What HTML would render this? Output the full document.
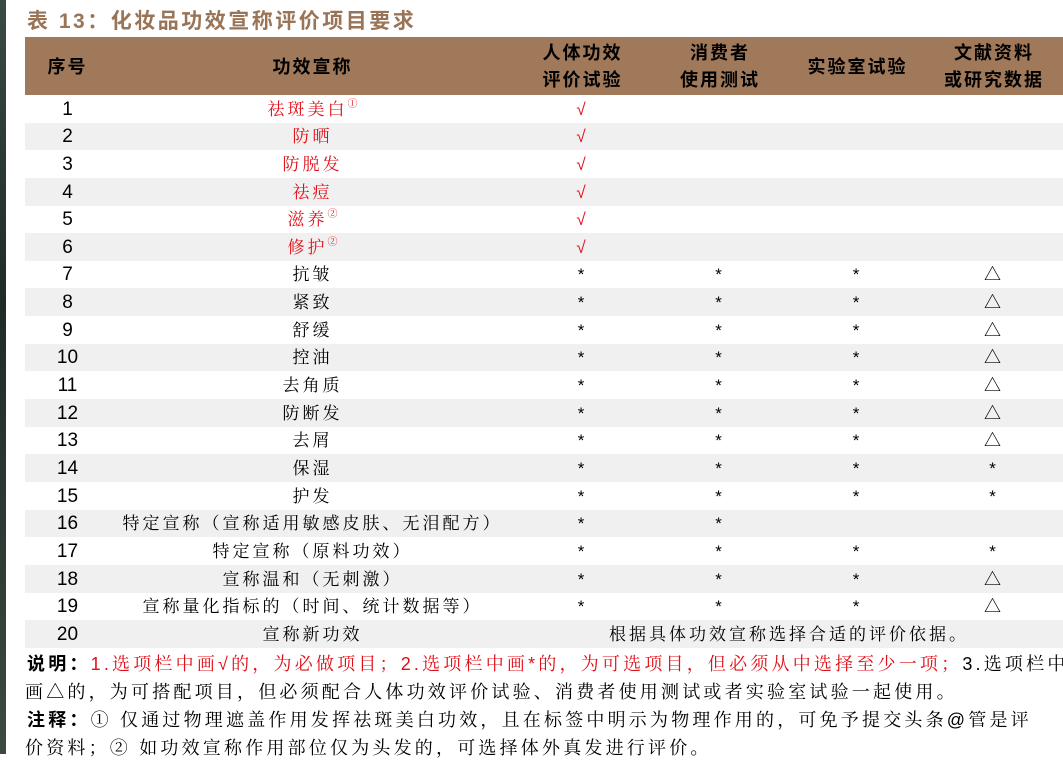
<!DOCTYPE html>
<html><head><meta charset="utf-8"><style>
body{margin:0;width:1063px;height:754px;background:#fff;overflow:hidden;position:relative;font-family:"Liberation Sans","Noto Serif CJK SC","Noto Sans CJK SC",serif;}
.strip{position:absolute;left:0;top:0;width:6px;height:754px;background:linear-gradient(#3a4a44,#1f2b27 40%,#3c4a40);}
.title{position:absolute;left:27px;top:5px;font-size:21px;font-weight:bold;color:#9a7456;font-family:"Liberation Sans","Noto Sans CJK SC",sans-serif;letter-spacing:2.5px}
table{position:absolute;left:25px;top:37px;width:1038px;border-collapse:collapse;table-layout:fixed}
th{background:#a0785a;height:58px;font-size:18px;font-weight:bold;line-height:27px;color:#000;font-family:"Noto Sans CJK SC",sans-serif;padding:0;letter-spacing:2px}
td{height:27.65px;padding:0;text-align:center;font-size:17px;line-height:27px;letter-spacing:3px;overflow:hidden}
td>span.c{display:block;position:relative;top:2px}
tr:nth-child(odd) td{background:#f0f0f0}
td.n{font-size:19px;letter-spacing:0}
.r{color:#e0101a}
sup{font-size:10px;line-height:0;vertical-align:baseline;position:relative;top:-8px;letter-spacing:0}
.notes{position:absolute;left:27px;top:650px;font-size:18px;line-height:27.5px;width:1060px;white-space:nowrap;letter-spacing:3.2px}
b{font-family:"Noto Sans CJK SC",sans-serif}
tbody tr td{vertical-align:bottom}
</style></head><body>
<div class="strip"></div>
<div class="title">表 13：化妆品功效宣称评价项目要求</div>
<table>
<colgroup><col style="width:85px"><col style="width:405px"><col style="width:135px"><col style="width:140px"><col style="width:135px"><col style="width:138px"></colgroup>
<tr><th>序号</th><th>功效宣称</th><th>人体功效<br>评价试验</th><th>消费者<br>使用测试</th><th>实验室试验</th><th>文献资料<br>或研究数据</th></tr>
<tr><td class="n">1</td><td class="r">祛斑美白<sup>①</sup></td><td class="r">√</td><td></td><td></td><td></td></tr>
<tr><td class="n">2</td><td class="r">防晒</td><td class="r">√</td><td></td><td></td><td></td></tr>
<tr><td class="n">3</td><td class="r">防脱发</td><td class="r">√</td><td></td><td></td><td></td></tr>
<tr><td class="n">4</td><td class="r">祛痘</td><td class="r">√</td><td></td><td></td><td></td></tr>
<tr><td class="n">5</td><td class="r">滋养<sup>②</sup></td><td class="r">√</td><td></td><td></td><td></td></tr>
<tr><td class="n">6</td><td class="r">修护<sup>②</sup></td><td class="r">√</td><td></td><td></td><td></td></tr>
<tr><td class="n">7</td><td>抗皱</td><td>*</td><td>*</td><td>*</td><td>△</td></tr>
<tr><td class="n">8</td><td>紧致</td><td>*</td><td>*</td><td>*</td><td>△</td></tr>
<tr><td class="n">9</td><td>舒缓</td><td>*</td><td>*</td><td>*</td><td>△</td></tr>
<tr><td class="n">10</td><td>控油</td><td>*</td><td>*</td><td>*</td><td>△</td></tr>
<tr><td class="n">11</td><td>去角质</td><td>*</td><td>*</td><td>*</td><td>△</td></tr>
<tr><td class="n">12</td><td>防断发</td><td>*</td><td>*</td><td>*</td><td>△</td></tr>
<tr><td class="n">13</td><td>去屑</td><td>*</td><td>*</td><td>*</td><td>△</td></tr>
<tr><td class="n">14</td><td>保湿</td><td>*</td><td>*</td><td>*</td><td>*</td></tr>
<tr><td class="n">15</td><td>护发</td><td>*</td><td>*</td><td>*</td><td>*</td></tr>
<tr><td class="n">16</td><td>特定宣称（宣称适用敏感皮肤、无泪配方）</td><td>*</td><td>*</td><td></td><td></td></tr>
<tr><td class="n">17</td><td>特定宣称（原料功效）</td><td>*</td><td>*</td><td>*</td><td>*</td></tr>
<tr><td class="n">18</td><td>宣称温和（无刺激）</td><td>*</td><td>*</td><td>*</td><td>△</td></tr>
<tr><td class="n">19</td><td>宣称量化指标的（时间、统计数据等）</td><td>*</td><td>*</td><td>*</td><td>△</td></tr>
<tr><td class="n">20</td><td>宣称新功效</td><td colspan="4">根据具体功效宣称选择合适的评价依据。</td></tr>
</table>
<div class="notes">
<div><b>说明：</b><span class="r">1.选项栏中画√的，为必做项目；2.选项栏中画*的，为可选项目，但必须从中选择至少一项；</span>3.选项栏中</div>
<div style="margin-left:-2px">画△的，为可搭配项目，但必须配合人体功效评价试验、消费者使用测试或者实验室试验一起使用。</div>
<div><b>注释：</b>① 仅通过物理遮盖作用发挥祛斑美白功效，且在标签中明示为物理作用的，可免予提交头条@管是评</div>
<div style="margin-left:-2px">价资料；② 如功效宣称作用部位仅为头发的，可选择体外真发进行评价。</div>
</div>
</body></html>
